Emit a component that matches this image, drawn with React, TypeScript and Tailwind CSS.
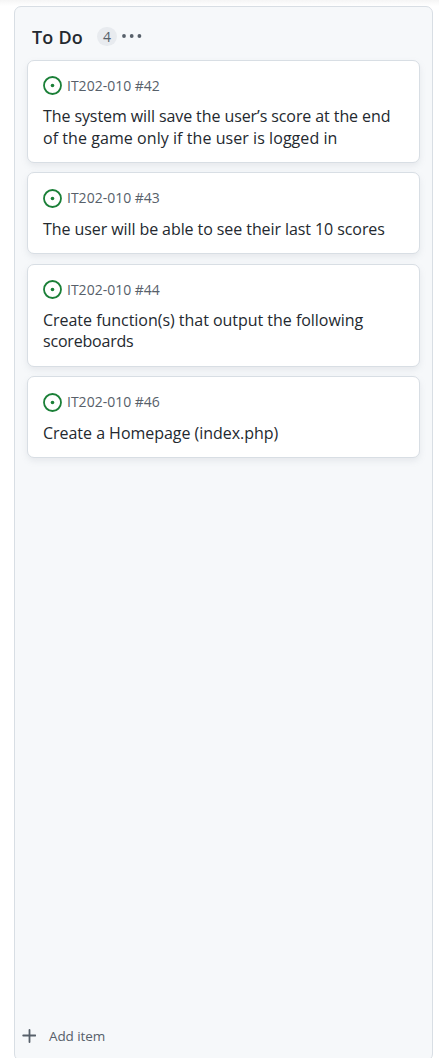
import React from "react";

type Card = {
  id: number;
  lines: { text: string; tracking: string }[];
  box: string;
  icon: string;
  title: string;
};

const cards: Card[] = [
  {
    id: 42,
    box: "h-[103px] mb-[9px]",
    icon: "mb-px",
    title: "mt-[9px] leading-[22px]",
    lines: [
      { text: "The system will save the user’s score at the end", tracking: "tracking-[-0.09px]" },
      { text: "of the game only if the user is logged in", tracking: "tracking-[0.06px]" },
    ],
  },
  {
    id: 43,
    box: "h-[82px] mb-[10px]",
    icon: "mt-px",
    title: "mt-[10px] leading-[22px]",
    lines: [
      { text: "The user will be able to see their last 10 scores", tracking: "tracking-[-0.08px]" },
    ],
  },
  {
    id: 44,
    box: "h-[103px] mb-[9px]",
    icon: "mb-px",
    title: "mt-[10px] leading-[21px]",
    lines: [
      { text: "Create function(s) that output the following", tracking: "tracking-[-0.03px]" },
      { text: "scoreboards", tracking: "tracking-[-0.2px]" },
    ],
  },
  {
    id: 46,
    box: "h-[82px]",
    icon: "mt-px",
    title: "mt-[10px] leading-[22px]",
    lines: [{ text: "Create a Homepage (index.php)", tracking: "tracking-[-0.03px]" }],
  },
];

function OpenIssueIcon({ className }: { className: string }) {
  return (
    <svg className={`h-[19px] w-[19px] shrink-0 ${className}`} viewBox="0 0 19 19" fill="none">
      <circle cx="9.5" cy="9.5" r="8.5" stroke="#1a7f37" strokeWidth="1.8" />
      <circle cx="9.5" cy="9.5" r="1.8" fill="#1a7f37" />
    </svg>
  );
}

function IssueCard({ card }: { card: Card }) {
  return (
    <article
      className={`${card.box} shrink-0 rounded-[7px] border border-[#d8dee4] bg-white pt-[15px] pl-[15px] shadow-[0_3px_6px_rgba(140,149,159,0.15)]`}
    >
      <div className="flex h-5 items-center gap-[5px]">
        <OpenIssueIcon className={card.icon} />
        <span className="whitespace-nowrap text-[14px] leading-5 text-[#57606a]">
          IT202-010 #{card.id}
        </span>
      </div>
      <div className={`text-[16px] text-[#24292f] ${card.title}`}>
        {card.lines.map((l) => (
          <div key={l.text} className={`whitespace-nowrap ${l.tracking}`}>
            {l.text}
          </div>
        ))}
      </div>
    </article>
  );
}

export default function App() {
  return (
    <div className="flex h-[1058px] w-[439px] flex-col overflow-hidden bg-white font-['Open_Sans','Noto_Sans',sans-serif]">
      <div className="h-[6px] shrink-0 bg-linear-to-b from-[#f5f5f5] to-white" />
      <section className="ml-[14px] flex h-[1055px] w-[419px] shrink-0 flex-col rounded-[7px] border border-[#d8dee4] bg-[#f6f8fa]">
        <header className="flex h-[53px] shrink-0 items-center pt-[7px] pl-[17px]">
          <h2 className="w-[65px] whitespace-nowrap text-[18px] leading-6 font-semibold tracking-[0.2px] text-[#24292f]">
            To Do
          </h2>
          <span className="mb-[2px] flex h-[19px] w-5 items-center justify-center rounded-full bg-[#e8ebef] pt-[2px] text-[14px] leading-none font-medium text-[#57606a]">
            4
          </span>
          <svg className="mb-[2px] ml-[4px] h-5 w-[22px]" viewBox="0 0 22 20" fill="#57606a">
            <circle cx="3" cy="10" r="1.9" />
            <circle cx="10.7" cy="10" r="1.9" />
            <circle cx="18.4" cy="10" r="1.9" />
          </svg>
        </header>
        <div className="flex flex-1 flex-col pr-[12px] pl-[12px]">
          {cards.map((c) => (
            <IssueCard key={c.id} card={c} />
          ))}
        </div>
        <button className="mb-[14px] flex h-5 shrink-0 items-center pl-[7px] text-[13.5px] leading-5 tracking-[-0.1px] text-[#57606a]">
          <svg className="mr-[13px] h-[14px] w-[14px]" viewBox="0 0 14 14" stroke="#57606a" strokeWidth="1.8" strokeLinecap="round">
            <path d="M7.5 .9v12.2M1.2 6.5h12.2" />
          </svg>
          <span>Add item</span>
        </button>
      </section>
    </div>
  );
}
